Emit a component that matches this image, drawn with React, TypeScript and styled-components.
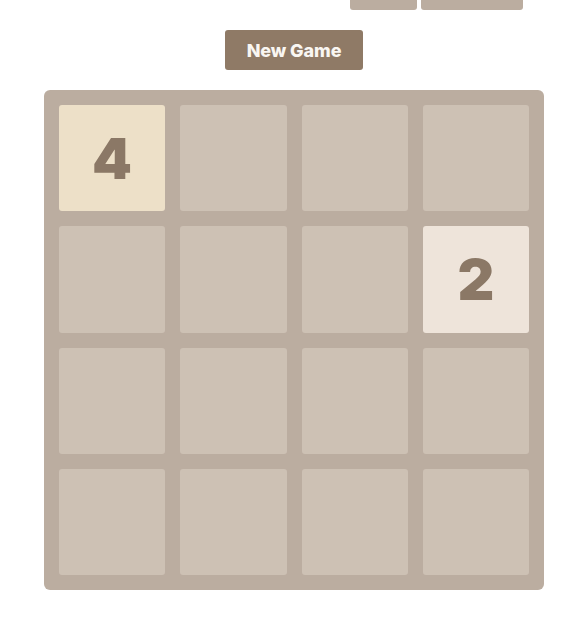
import styled, { createGlobalStyle } from 'styled-components';

const GlobalStyle = createGlobalStyle`
  html, body {
    margin: 0;
    padding: 0;
    background: #ffffff;
    font-family: "Inter", "Open Sans", "Liberation Sans", sans-serif;
    overflow: hidden;
  }
`;

const Page = styled.div`
  width: 500px;
  margin-left: 44px;
  display: flex;
  flex-direction: column;
  align-items: center;
`;

// page is scrolled a little, only the bottom of the score boxes shows
const Header = styled.div`
  align-self: stretch;
  display: flex;
  justify-content: flex-end;
  gap: 4px;
  padding-right: 21px;
  margin-top: -46px;
`;

const ScoreBox = styled.div<{ $width: number }>`
  width: ${(p) => p.$width}px;
  height: 56px;
  background: #bbada0;
  border-radius: 3px;
`;

const NewGameButton = styled.button`
  margin-top: 20px;
  width: 138px;
  height: 40px;
  border: none;
  border-radius: 3px;
  background: #8f7a66;
  color: #f9f6f2;
  font-family: "Inter", "Open Sans", sans-serif;
  font-size: 18px;
  font-weight: 800;
  letter-spacing: -0.1px;
  cursor: pointer;
`;

const Board = styled.div`
  margin-top: 20px;
  width: 500px;
  height: 500px;
  padding: 15px;
  box-sizing: border-box;
  background: #bbada0;
  border-radius: 6px;
  display: grid;
  grid-template-columns: repeat(4, 1fr);
  grid-template-rows: repeat(4, 1fr);
  gap: 15px;
`;

const tileColors: Record<number, string> = {
  0: '#cdc1b4',
  2: '#eee4da',
  4: '#ede0c8',
};

const Tile = styled.div<{ $value: number }>`
  border-radius: 3px;
  background: ${(p) => tileColors[p.$value] ?? '#cdc1b4'};
  color: #8b7866;
  font-family: "Inter", "Open Sans", sans-serif;
  font-size: 57px;
  font-weight: 900;
  display: flex;
  align-items: center;
  justify-content: center;
`;

const grid = [
  [4, 0, 0, 0],
  [0, 0, 0, 2],
  [0, 0, 0, 0],
  [0, 0, 0, 0],
];

export default function App() {
  return (
    <>
      <GlobalStyle />
      <Page>
        <Header>
          <ScoreBox $width={67} />
          <ScoreBox $width={102} />
        </Header>
        <NewGameButton>New Game</NewGameButton>
        <Board>
          {grid.flat().map((v, i) => (
            <Tile key={i} $value={v}>
              {v ? v : ''}
            </Tile>
          ))}
        </Board>
      </Page>
    </>
  );
}
